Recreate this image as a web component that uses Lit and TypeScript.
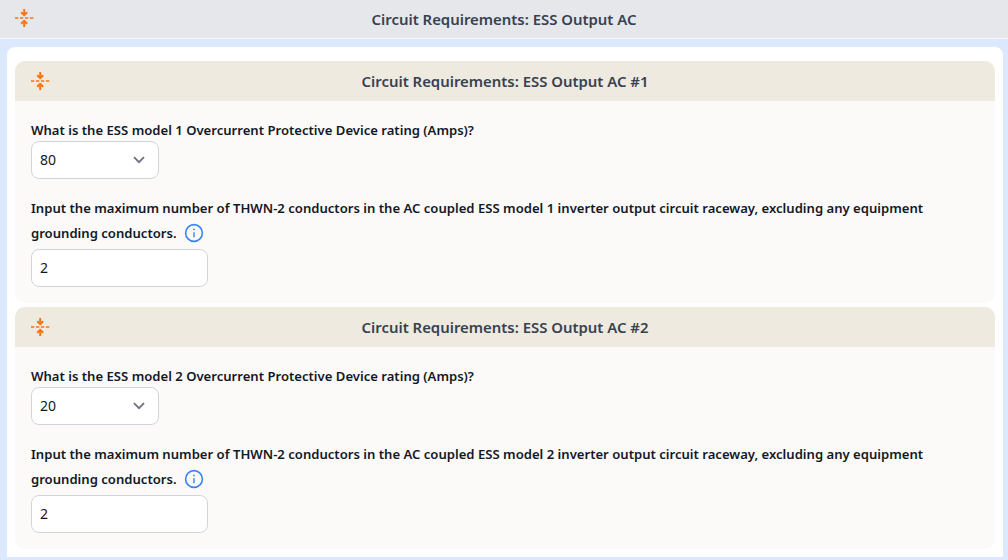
import { LitElement, html, css } from "lit";
import { customElement } from "lit/decorators.js";

const collapse = html`<svg class="collapse" width="20" height="20" viewBox="0 0 20 20" fill="none" stroke="#fb7412" stroke-width="2">
  <path d="M1 10h18.3" stroke-dasharray="3.3 1.7" stroke-width="1.7"/>
  <path d="M10.2 1v5.8M7.2 4.2 10.2 7.2l3-3"/>
  <path d="M10.2 19v-5.8M7.2 15.8 10.2 12.8l3 3"/>
</svg>`;

const info = html`<svg class="info" width="20" height="20" viewBox="0 0 20 20" fill="none">
  <circle cx="10" cy="10" r="8.4" stroke="#3b82f6" stroke-width="1.6"/>
  <path d="M10 9.2v5" stroke="#3b82f6" stroke-width="1.4"/>
  <circle cx="10" cy="6.4" r="0.9" fill="#3b82f6"/>
</svg>`;

const chevron = html`<svg width="12" height="8" viewBox="0 0 12 8" fill="none" stroke="#6b7280" stroke-width="1.8"><path d="M1 1.2l5 5 5-5"/></svg>`;

@customElement("app-root")
export class AppRoot extends LitElement {
  static styles = css`
    :host { display: block; width: 1008px; height: 560px; overflow: hidden; background: #dbe8fe;
      font-family: "Noto Sans", "Open Sans", sans-serif; color: #111827; }
    .top { height: 38px; background: #e5e7eb; border-bottom: 1px solid #f3f6fb; display: flex; align-items: center; position: relative; justify-content: center; }
    .top .collapse { position: absolute; left: 14px; top: 8px; }
    .title { font-size: 14.9px; font-weight: 600; color: #374151; }
    .card { margin: 8px 5px 0 7px; background: #fff; border-radius: 8px 8px 0 0; padding: 14px 8px 7px; height: 510px; box-sizing: border-box; display: flex; flex-direction: column; gap: 4px; }
    .sec { background: #fcfaf8; border-radius: 10px; }
    .head { height: 40px; background: #eeeae0; border-radius: 10px 10px 0 0; display: flex; align-items: center; justify-content: center; position: relative; }
    .head .collapse { position: absolute; left: 15px; top: 10px; }
    .body { padding: 18px 16px 16px; }
    .q { font-size: 13.1px; font-weight: 600; line-height: 25px; color: #111827; margin: 0; }
    .q.first { line-height: 22px; }
    .q svg { vertical-align: -5px; margin-left: 7px; }
    .box { box-sizing: border-box; height: 38px; background: #fff; border: 1px solid #d1d5db; border-radius: 8px; display: flex; align-items: center; padding: 0 8px 2px; font-size: 14px; color: #111827; }
    .sel { width: 128px; justify-content: space-between; padding-right: 13px; margin-bottom: 17px; }
    .sel svg { margin-top: 2px; }
    .inp { width: 177px; margin-top: 3px; }
  `;

  section(n: number, rating: string, value: string) {
    const title = `Circuit Requirements: ESS Output AC #${n}`;
    const q1 = `What is the ESS model ${n} Overcurrent Protective Device rating (Amps)?`;
    const q2 = `Input the maximum number of THWN-2 conductors in the AC coupled ESS model ${n} inverter output circuit raceway, excluding any equipment grounding conductors.`;
    return html`<div class="sec">
      <div class="head">${collapse}<span class="title">${title}</span></div>
      <div class="body">
        <p class="q first">${q1}</p>
        <div class="box sel"><span>${rating}</span>${chevron}</div>
        <p class="q">${q2}${info}</p>
        <div class="box inp">${value}</div>
      </div>
    </div>`;
  }

  render() {
    return html`
      <div class="top">${collapse}<span class="title">Circuit Requirements: ESS Output AC</span></div>
      <div class="card">
        ${this.section(1, "80", "2")}
        ${this.section(2, "20", "2")}
      </div>`;
  }
}
